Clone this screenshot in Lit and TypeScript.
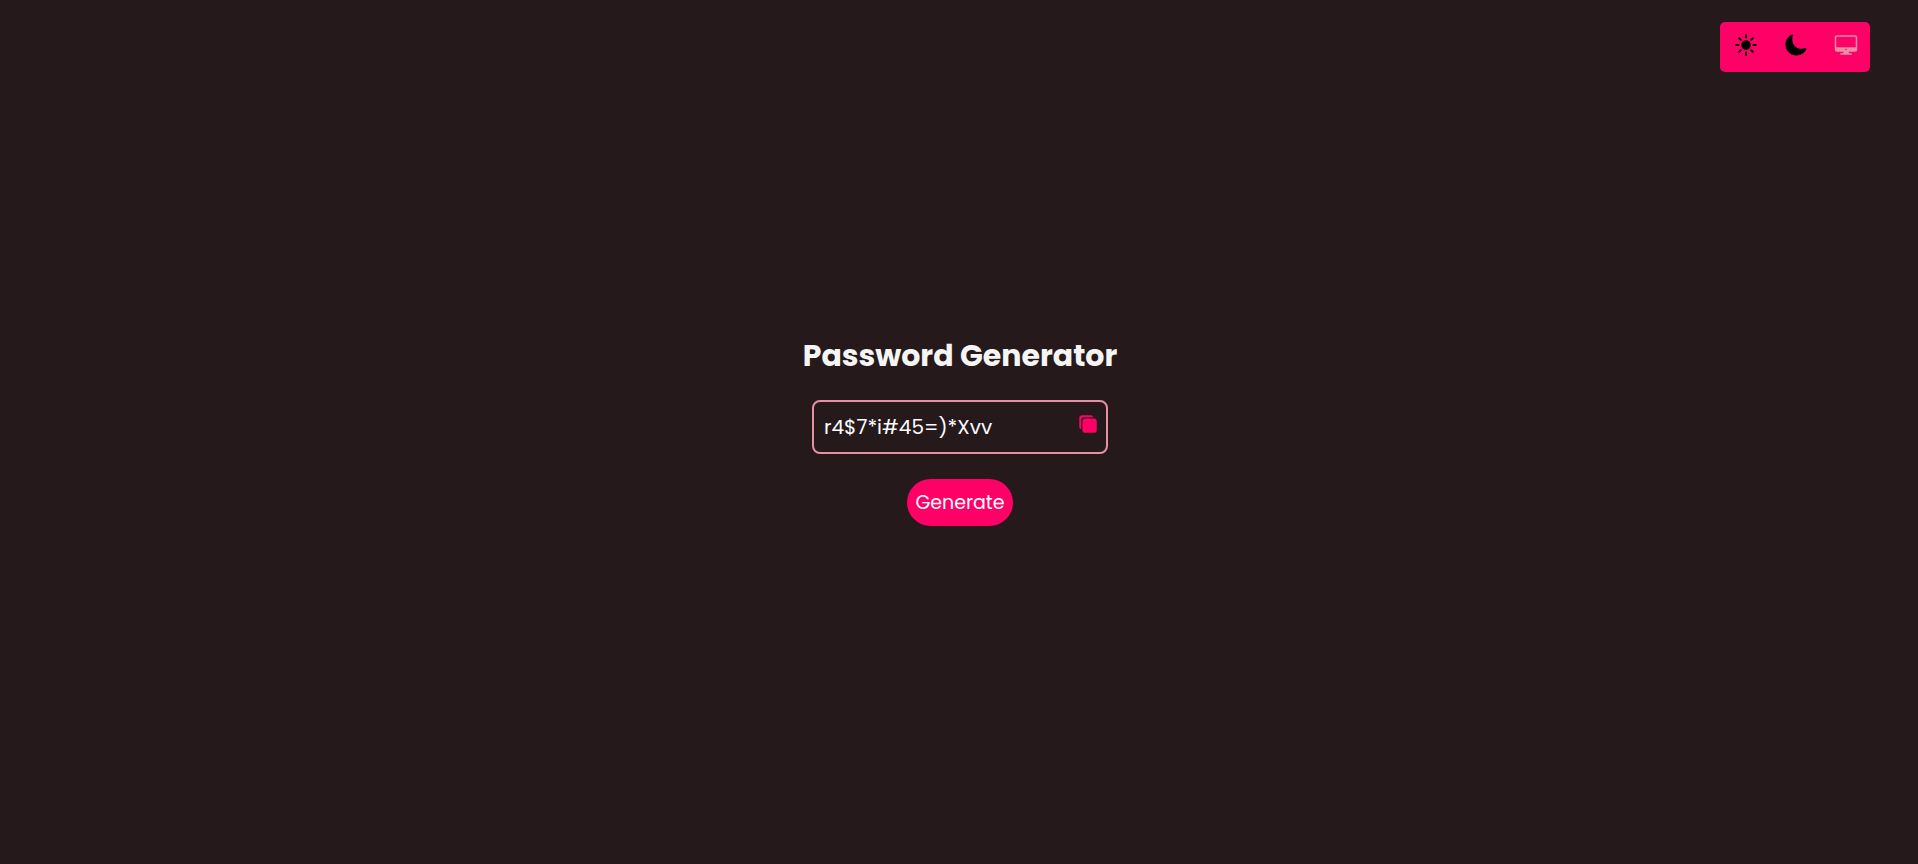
import { LitElement, html, css, svg } from "lit";
import { customElement, state } from "lit/decorators.js";

const sun = svg`<path d="M256 48v48M256 416v48M403 109l-34 34M143 369l-34 34M464 256h-48M96 256H48M403 403l-34-34M143 143l-34-34" fill="none" stroke="currentColor" stroke-width="44" stroke-linecap="round"/><circle cx="256" cy="256" r="102"/>`;

const moon = svg`<path d="M264 480A232 232 0 0132 248c0-94 54-178.28 137.61-214.67a16 16 0 0121.06 21.06C181.07 76.43 176 104.66 176 136c0 110.28 89.72 200 200 200 31.34 0 59.57-5.07 81.61-14.67a16 16 0 0121.06 21.06C442.28 426 358 480 264 480z"/>`;

const desktop = svg`<rect x="32" y="64" width="448" height="320" rx="32" ry="32" fill="none" stroke="currentColor" stroke-linejoin="round" stroke-width="32"/><path stroke="currentColor" stroke-linecap="round" stroke-linejoin="round" stroke-width="32" d="M304 448l-8-64h-80l-8 64h96zM368 448H144"/><path d="M32 304v48a32.09 32.09 0 0032 32h384a32.09 32.09 0 0032-32v-48zm224 64a16 16 0 1116-16 16 16 0 01-16 16z"/>`;

const copy = svg`<path d="M408 480H184a72 72 0 01-72-72V184a72 72 0 0172-72h224a72 72 0 0172 72v224a72 72 0 01-72 72z"/><path d="M160 80h235.88A72.12 72.12 0 00328 32H104a72 72 0 00-72 72v224a72.12 72.12 0 0048 67.88V160a80 80 0 0180-80z"/>`;

const themes = [
  { id: "light", label: "Light theme", icon: sun },
  { id: "dark", label: "Dark theme", icon: moon },
  { id: "system", label: "System theme", icon: desktop },
];

const characters =
  "ABCDEFGHIJKLMNOPQRSTUVWXYZabcdefghijklmnopqrstuvwxyz0123456789!@#$%^&*()=+";

@customElement("app-root")
export class AppRoot extends LitElement {
  static styles = css`
    :host {
      --accent: #ff0066;
      --soft: #e68fa5;
      display: grid;
      min-height: 100vh;
      background: #25191c;
      color: #f5f5f5;
      font-family: Poppins, Inter, sans-serif;
    }
    * {
      box-sizing: border-box;
    }
    button {
      border: 0;
      padding: 0;
      background: none;
      color: inherit;
      font: inherit;
      cursor: pointer;
    }
    svg {
      display: block;
      fill: currentColor;
    }
    .themes {
      grid-area: 1 / 1;
      place-self: start end;
      z-index: 1;
      display: flex;
      margin: 22px 48px;
      border-radius: 5px;
      background: var(--accent);
    }
    .theme {
      display: grid;
      justify-items: center;
      align-items: start;
      width: 50px;
      height: 50px;
      padding: 11px 0 0 1px;
      color: #000;
    }
    .theme.active {
      color: var(--soft);
    }
    .theme svg {
      width: 24px;
      height: 24px;
    }
    .generator {
      grid-area: 1 / 1;
      place-self: center;
      display: flex;
      flex-direction: column;
      align-items: center;
      gap: 25px;
      padding: 0 0 2px 2px;
    }
    h1 {
      margin: 0;
      font-size: 30px;
      line-height: 38px;
      font-weight: 700;
    }
    .field {
      display: flex;
      align-items: flex-start;
      width: 296px;
      height: 54px;
      padding: 0 8px 0 10px;
      border: 2px solid var(--soft);
      border-radius: 8px;
    }
    .password {
      flex: 1;
      min-width: 0;
      height: 50px;
      padding: 0;
      border: 0;
      outline: 0;
      background: transparent;
      color: #fff;
      font: inherit;
      font-size: 20px;
    }
    .copy {
      margin-top: 12px;
      color: var(--accent);
    }
    .copy svg {
      width: 20px;
      height: 20px;
    }
    .generate {
      height: 47px;
      padding: 0 8px;
      border-radius: 24px;
      background: var(--accent);
      color: #fff;
      font-size: 19px;
    }
  `;

  @state() private theme = "system";
  @state() private password = "r4$7*i#45=)*Xvv";

  private generate() {
    const values = crypto.getRandomValues(new Uint32Array(15));
    this.password = Array.from(values, (v) => characters[v % characters.length]).join("");
  }

  private copyPassword() {
    navigator.clipboard?.writeText(this.password);
  }

  render() {
    return html`
      <nav class="themes" aria-label="Theme">
        ${themes.map(
          (t) => html`<button
            type="button"
            class="theme ${t.id === this.theme ? "active" : ""}"
            aria-label=${t.label}
            aria-pressed=${t.id === this.theme}
            @click=${() => (this.theme = t.id)}
          >
            <svg viewBox="0 0 512 512" aria-hidden="true">${t.icon}</svg>
          </button>`
        )}
      </nav>
      <main class="generator">
        <h1>Password Generator</h1>
        <div class="field">
          <input class="password" type="text" readonly aria-label="Password" .value=${this.password} />
          <button class="copy" type="button" aria-label="Copy password" @click=${this.copyPassword}>
            <svg viewBox="0 0 512 512" aria-hidden="true">${copy}</svg>
          </button>
        </div>
        <button class="generate" type="button" @click=${this.generate}>Generate</button>
      </main>
    `;
  }
}
